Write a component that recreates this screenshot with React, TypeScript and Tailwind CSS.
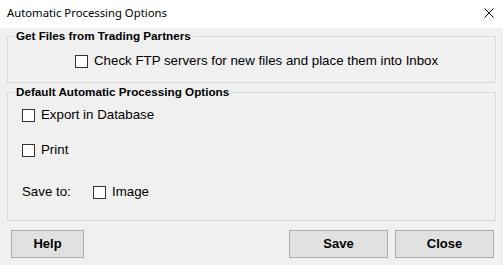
import React from "react";

function Box() {
  return <span className="inline-block w-[13px] h-[13px] border border-[#333333] bg-white shrink-0" />;
}

export default function App() {
  const body = { fontFamily: '"Liberation Sans", Arial, sans-serif' };
  return (
    <div className="w-[503px] h-[265px] bg-[#f0f0f0] overflow-hidden text-black" style={body}>
      <div className="h-[28px] bg-white flex items-center justify-between pl-[7px] pr-[9px] pb-[1px]">
        <span className="text-[11.3px]" style={{ fontFamily: '"Noto Sans", "Open Sans", sans-serif' }}>
          Automatic Processing Options
        </span>
        <svg width="10" height="10" viewBox="0 0 10 10" className="mt-[-1px]">
          <path d="M0.5 0.5 L9.5 9.5 M9.5 0.5 L0.5 9.5" stroke="#000" strokeWidth="1" fill="none" />
        </svg>
      </div>

      <fieldset className="mx-[7px] mt-[1px] border border-[#dcdcdc]">
        <legend className="ml-[6px] px-[2px] text-[11.7px] font-bold leading-[14px]">
          Get Files from Trading Partners
        </legend>
        <div className="flex items-center gap-[6px] pl-[67px] pt-[10px] pb-[13px] text-[13.3px] leading-[16px]">
          <Box />
          <span>Check FTP servers for new files and place them into Inbox</span>
        </div>
      </fieldset>

      <fieldset className="mx-[7px] mt-[2px] border border-[#dcdcdc]">
        <legend className="ml-[6px] px-[2px] text-[11.7px] font-bold leading-[14px]">
          Default Automatic Processing Options
        </legend>
        <div className="flex flex-col pl-[14px] pt-[8px] pb-[20px] text-[13.3px] leading-[16px]">
          <div className="flex items-center gap-[6px]">
            <Box />
            <span>Export in Database</span>
          </div>
          <div className="flex items-center gap-[6px] mt-[19px]">
            <Box />
            <span>Print</span>
          </div>
          <div className="flex items-center mt-[26px]">
            <span className="w-[71px]">Save to:</span>
            <Box />
            <span className="ml-[6px]">Image</span>
          </div>
        </div>
      </fieldset>

      <div className="flex items-center mt-[9px] pl-[11px] pr-[9px]">
        <button className="w-[73px] h-[28px] bg-[#e1e1e1] border border-[#adadad] text-[13px] font-bold">
          Help
        </button>
        <div className="flex-1" />
        <button className="w-[99px] h-[28px] bg-[#e1e1e1] border border-[#adadad] text-[13px] font-bold">
          Save
        </button>
        <button className="w-[99px] h-[28px] ml-[7px] bg-[#e1e1e1] border border-[#adadad] text-[13px] font-bold">
          Close
        </button>
      </div>
    </div>
  );
}
